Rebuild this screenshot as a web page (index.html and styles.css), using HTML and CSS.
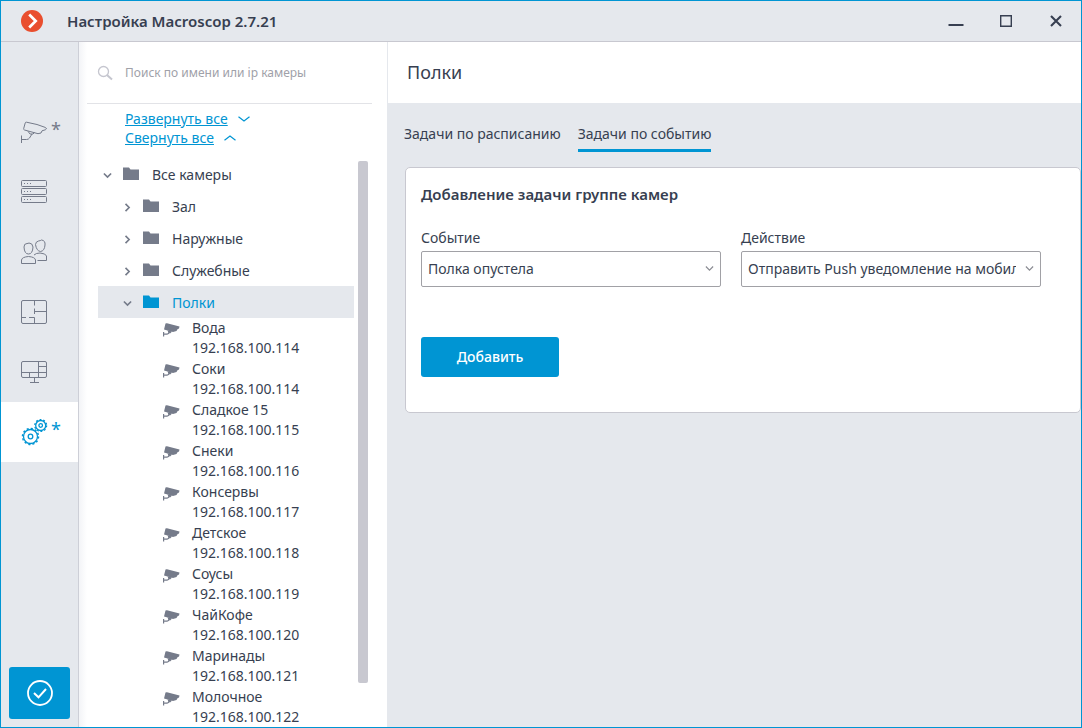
FILE: index.html
```html
<!DOCTYPE html>
<html lang="ru">
<head>
<meta charset="utf-8">
<meta name="viewport" content="width=device-width, initial-scale=1">
<title>Настройка Macroscop 2.7.21</title>
<link rel="stylesheet" href="styles.css">
</head>
<body>
<svg class="defs" aria-hidden="true">
  <symbol id="folder" viewBox="0 0 16 13"><path fill="currentColor" d="M0 .5h6l1.500 2H16V13H0z"/></symbol>
  <symbol id="cam" viewBox="0 0 17 14">
    <path fill="currentColor" d="M2.500.6Q3 0 4 .2L16.500 3.600 16 5.500 14.500 6.300 13.500 8 10 9 1 6.500z"/>
    <path fill="none" stroke="currentColor" stroke-width="1.200" d="M.6 9v4.500M.6 11.200h3.500q1.200 0 3-2.700"/>
    <path fill="currentColor" d="m4.500 7.200 4.500 1.200-1.500 1.800H5.500z"/>
  </symbol>
  <symbol id="down" viewBox="0 0 10 6"><path fill="none" stroke="currentColor" stroke-width="1.800" d="M1 .8 5 4.800 9 .8"/></symbol>
  <symbol id="right" viewBox="0 0 6 10"><path fill="none" stroke="currentColor" stroke-width="1.800" d="M.8 1 4.800 5 .8 9"/></symbol>
  <symbol id="thin-down" viewBox="0 0 10 6"><path fill="none" stroke="currentColor" stroke-width="1.300" d="M1 .8 5 4.800 9 .8"/></symbol>
</svg>
<div class="window">
  <header class="titlebar">
    <svg class="logo" viewBox="0 0 22 22" aria-hidden="true"><circle cx="11" cy="11" r="11" fill="#e94e2e"/><path d="M8.200 4.500 14.700 11l-6.500 6.500" fill="none" stroke="#fff" stroke-width="2.700"/></svg>
    <h1 class="titlebar-text">Настройка Macroscop 2.7.21</h1>
    <div class="controls">
      <button class="control" aria-label="Свернуть"><svg width="16" height="16" viewBox="0 0 16 16"><path d="M.5 12h15" stroke="currentColor" stroke-width="2"/></svg></button>
      <button class="control" aria-label="Развернуть"><svg width="16" height="16" viewBox="0 0 16 16"><path d="M2.700 2.700h10.600v10.600H2.700z" fill="none" stroke="currentColor" stroke-width="1.400"/></svg></button>
      <button class="control" aria-label="Закрыть"><svg width="16" height="16" viewBox="0 0 16 16"><path d="m3 3 10 10M13 3 3 13" stroke="currentColor" stroke-width="2.100"/></svg></button>
    </div>
  </header>
  <div class="body">
    <nav class="rail">
      <button class="rail-item" aria-label="Камеры"><svg class="rail-icon" viewBox="0 0 28 28"><path d="M6.500 4.200 17 6.500l8.500 3q1 .4.800 1.500l-1 .8-3.300 1-1 2.200-3 .7L4.500 12Q3.300 11.500 3.700 10.500L5.200 5q.3-1 1.300-.8ZM8 13.300l2 2.700h3l1.500-1.500M12 16 9.500 20q-1 1.500-3 1.500h-5M1.500 17.500V25"/></svg><span class="star">*</span></button>
      <button class="rail-item" aria-label="Серверы"><svg class="rail-icon" viewBox="0 0 28 28"><rect x="1.500" y="2.500" width="25" height="6" rx="1"/><rect x="1.500" y="10.500" width="25" height="6" rx="1"/><rect x="1.500" y="18.500" width="25" height="6" rx="1"/><path stroke-dasharray="1 2" d="M4 5.500h8M4 13.500h8M4 21.500h8"/></svg></button>
      <button class="rail-item" aria-label="Пользователи"><svg class="rail-icon" viewBox="0 0 28 28"><path d="M4 9q0-3.500 3-3.500 1 0 2-.5 3.500 0 4 4-.4 7-4.500 7T4 9ZM1.500 25.500V22q.5-3 7-3.500 6.500.5 7 3.500v3.500ZM15.500 6.500q.3-3 3-3.500 2-.3 3-1 4 .5 3.500 5-.5 6-4.500 6.500-4-.5-5-7ZM14 17q2-2 6-2 6 .5 6.500 3v4.500h-9"/></svg></button>
      <button class="rail-item" aria-label="Планы"><svg class="rail-icon" viewBox="0 0 28 28"><rect x="1.500" y="2.500" width="25" height="23" rx="1.500"/><path d="M14.500 2.500v5M14.500 10.500v5.500M14.500 13.500h12M2 19.500h4M9 19.500h5.500v6"/></svg></button>
      <button class="rail-item" aria-label="Виды"><svg class="rail-icon" viewBox="0 0 28 28"><rect x="1.500" y="3.500" width="25" height="16" rx="1.500"/><path d="M18.500 3.500v16M18.500 8.500h8M1.500 14.500h25M9.500 14.500v5M14.500 19.500v5M10 24.500h9"/></svg></button>
      <button class="rail-item rail-item-active" aria-label="Автоматизация"><svg class="rail-icon" viewBox="0 0 28 28"><g stroke-width="1.300"><circle cx="10.500" cy="18.500" r="7"/><circle cx="10.500" cy="18.500" r="8" stroke-width="1.500" stroke-dasharray="2.100 2.090"/><circle cx="10.500" cy="18.500" r="2.300"/><circle cx="20.700" cy="7.500" r="5"/><circle cx="20.700" cy="7.500" r="5.900" stroke-width="1.300" stroke-dasharray="1.860 1.850"/><circle cx="20.700" cy="7.500" r="1.800"/></g></svg><span class="star">*</span></button>
      <button class="apply" aria-label="Применить"><svg width="28" height="28" viewBox="0 0 28 28"><circle cx="14" cy="14" r="12" fill="none" stroke="#fff" stroke-width="1.800"/><path d="m8 14 4.500 4.300 7.500-8.300" fill="none" stroke="#fff" stroke-width="2"/></svg></button>
    </nav>
    <aside class="side">
      <label class="search"><svg width="16" height="16" viewBox="0 0 16 16" aria-hidden="true"><circle cx="6.500" cy="6.500" r="5" fill="none" stroke="#c5c6cf" stroke-width="1.300"/><path d="m10 10 5 4.500" stroke="#c5c6cf" stroke-width="2"/></svg><input class="search-input" type="text" aria-label="Поиск" placeholder="Поиск по имени или ip камеры"></label>
      <div class="links">
        <div class="link-row"><a class="link" href="#">Развернуть все</a><svg width="12" height="6" viewBox="0 0 12 6"><path d="M.5.7 6 5 11.500.7" fill="none" stroke="currentColor" stroke-width="1.200"/></svg></div>
        <div class="link-row"><a class="link" href="#">Свернуть все</a><svg width="12" height="6" viewBox="0 0 12 6"><path d="M.5 5.300 6 1l5.500 4.300" fill="none" stroke="currentColor" stroke-width="1.200"/></svg></div>
      </div>
      <div class="tree-wrap">
        <ul class="tree">
          <li class="node"><svg class="arrow"><use href="#down"/></svg><svg class="folder"><use href="#folder"/></svg>Все камеры</li>
          <li class="node node-child"><svg class="arrow"><use href="#right"/></svg><svg class="folder"><use href="#folder"/></svg>Зал</li>
          <li class="node node-child"><svg class="arrow"><use href="#right"/></svg><svg class="folder"><use href="#folder"/></svg>Наружные</li>
          <li class="node node-child"><svg class="arrow"><use href="#right"/></svg><svg class="folder"><use href="#folder"/></svg>Служебные</li>
          <li class="node node-child node-selected"><svg class="arrow"><use href="#down"/></svg><svg class="folder"><use href="#folder"/></svg>Полки</li>
          <li class="camera"><svg class="cam"><use href="#cam"/></svg><span>Вода<br>192.168.100.114</span></li>
          <li class="camera"><svg class="cam"><use href="#cam"/></svg><span>Соки<br>192.168.100.114</span></li>
          <li class="camera"><svg class="cam"><use href="#cam"/></svg><span>Сладкое 15<br>192.168.100.115</span></li>
          <li class="camera"><svg class="cam"><use href="#cam"/></svg><span>Снеки<br>192.168.100.116</span></li>
          <li class="camera"><svg class="cam"><use href="#cam"/></svg><span>Консервы<br>192.168.100.117</span></li>
          <li class="camera"><svg class="cam"><use href="#cam"/></svg><span>Детское<br>192.168.100.118</span></li>
          <li class="camera"><svg class="cam"><use href="#cam"/></svg><span>Соусы<br>192.168.100.119</span></li>
          <li class="camera"><svg class="cam"><use href="#cam"/></svg><span>ЧайКофе<br>192.168.100.120</span></li>
          <li class="camera"><svg class="cam"><use href="#cam"/></svg><span>Маринады<br>192.168.100.121</span></li>
          <li class="camera"><svg class="cam"><use href="#cam"/></svg><span>Молочное<br>192.168.100.122</span></li>
        </ul>
        <div class="scrollbar" aria-hidden="true"><div class="thumb"></div></div>
      </div>
    </aside>
    <main class="main">
      <h2 class="page-title">Полки</h2>
      <div class="tabs" role="tablist">
        <button class="tab" role="tab" aria-selected="false">Задачи по расписанию</button>
        <button class="tab tab-active" role="tab" aria-selected="true">Задачи по событию</button>
      </div>
      <section class="card">
        <h3 class="card-title">Добавление задачи группе камер</h3>
        <div class="fields">
          <div class="field"><label for="event">Событие</label><div class="select-box"><select class="select" id="event"><option>Полка опустела</option></select><svg class="select-arrow"><use href="#thin-down"/></svg></div></div>
          <div class="field"><label for="action">Действие</label><div class="select-box"><select class="select" id="action"><option>Отправить Push уведомление на мобильный клиент</option></select><svg class="select-arrow"><use href="#thin-down"/></svg></div></div>
        </div>
        <button class="add">Добавить</button>
      </section>
    </main>
  </div>
</div>
</body>
</html>
```
FILE: styles.css
```css
* { box-sizing: border-box; }
body {
  margin: 0;
  font: 14px/20px "Noto Sans", "Open Sans", sans-serif;
  color: #373f51;
}
button, input, select { font: inherit; color: inherit; }
button { border: 0; padding: 0; background: none; }
h1, h2, h3 { margin: 0; }
.defs { display: none; }
.window {
  height: 100vh;
  display: flex;
  flex-direction: column;
  border: 1px solid #0095d3;
  background: #e5e8ed;
}
.titlebar {
  flex: none;
  height: 41px;
  display: flex;
  align-items: center;
  padding: 0 17px 0 20px;
  border-bottom: 1px solid #c8c8d0;
}
.logo { width: 22px; height: 22px; }
.titlebar-text { margin-left: 24px; font-size: 15px; font-weight: 600; }
.controls { display: flex; gap: 34px; margin-left: auto; }
.control { width: 16px; height: 16px; }
.control svg { display: block; }
.body { flex: 1; min-height: 0; display: flex; }

.rail {
  flex: none;
  width: 78px;
  display: flex;
  flex-direction: column;
  padding: 60px 0 8px;
  border-right: 1px solid #cdcfd7;
}
.rail-item {
  height: 60px;
  display: flex;
  align-items: center;
  padding-left: 19px;
  color: #757b8a;
}
.rail-item-active { background: #fff; color: #0095d3; }
.rail-icon {
  width: 28px;
  height: 28px;
  fill: none;
  stroke: currentColor;
  stroke-width: 1;
}
.star { margin: 0 0 6px 3px; font-size: 18px; }
.apply {
  width: 61px;
  height: 52px;
  display: grid;
  place-items: center;
  margin: auto 0 0 8px;
  border-radius: 3px;
  background: #0095d3;
}

.side {
  flex: none;
  width: 309px;
  display: flex;
  flex-direction: column;
  padding: 0 15px 5px 8px;
  border-right: 1px solid #e5e8ed;
  background: linear-gradient(to right, #f3f4f7, #fff 8px);
}
.search {
  height: 62px;
  display: flex;
  align-items: center;
  gap: 12px;
  padding-left: 10px;
  border-bottom: 1px solid #e2e3e7;
}
.search-input {
  flex: 1;
  min-width: 0;
  border: 0;
  padding: 0;
  outline: 0;
  background: none;
  font-size: 12px;
}
.search-input::placeholder { color: #a0a1a9; }
.links { padding: 5px 0 11px 38px; color: #0095d3; line-height: 19px; }
.link-row { display: flex; align-items: center; gap: 10px; }
.link { color: inherit; }
.tree-wrap { flex: 1; min-height: 0; display: flex; gap: 4px; padding: 0 4px 0 11px; }
.tree { flex: 1; margin: 0; padding: 0; list-style: none; overflow: hidden; }
.node { height: 32px; display: flex; align-items: center; padding: 2px 0 0 5px; }
.node-child { padding-left: 25px; }
.node-selected { background: #e5e8ed; color: #0095d3; }
.arrow { width: 9px; height: 9px; margin-right: 11px; color: #757b8a; }
.folder { width: 16px; height: 13px; margin: 0 13px 4px 0; color: #757b8a; }
.node-selected .folder { color: #0095d3; }
.camera { height: 41px; display: flex; padding-left: 65px; }
.cam { width: 17px; height: 14px; margin: 5px 12px 0 0; color: #757b8a; }
.scrollbar { width: 10px; padding-top: 3px; }
.thumb { height: 93%; border-radius: 2px; background: #c8c8d0; }

.main { flex: 1; min-width: 0; }
.page-title {
  padding: 18px 19px 19px;
  background: #fff;
  font-size: 18px;
  line-height: 24px;
  font-weight: 400;
}
.tabs { display: flex; gap: 17px; padding: 20px 16px 0; }
.tab { height: 29px; padding-bottom: 4px; border-bottom: 3px solid transparent; }
.tab-active { border-color: #0095d3; }
.card {
  margin: 15px 0 0 17px;
  padding: 16px 15px 35px;
  border: 1px solid #c8c8d0;
  border-radius: 5px;
  background: #fff;
}
.card-title { font-size: 15px; line-height: 20px; font-weight: 600; }
.fields { display: flex; gap: 20px; margin-top: 24px; }
.field { width: 300px; }
.field label { display: block; line-height: 20px; margin-bottom: 3px; }
.select-box { position: relative; }
.select {
  display: block;
  width: 100%;
  height: 36px;
  padding: 0 24px 0 6px;
  border: 1px solid #a1a1a6;
  border-radius: 2px;
  appearance: none;
  background: #fff;
}
.select-arrow {
  position: absolute;
  right: 7px;
  top: 13px;
  width: 9px;
  height: 9px;
  color: #8b8c93;
  pointer-events: none;
}
.add {
  width: 138px;
  height: 40px;
  margin-top: 50px;
  border-radius: 3px;
  background: #0095d3;
  color: #fff;
  font-weight: 500;
}
```
